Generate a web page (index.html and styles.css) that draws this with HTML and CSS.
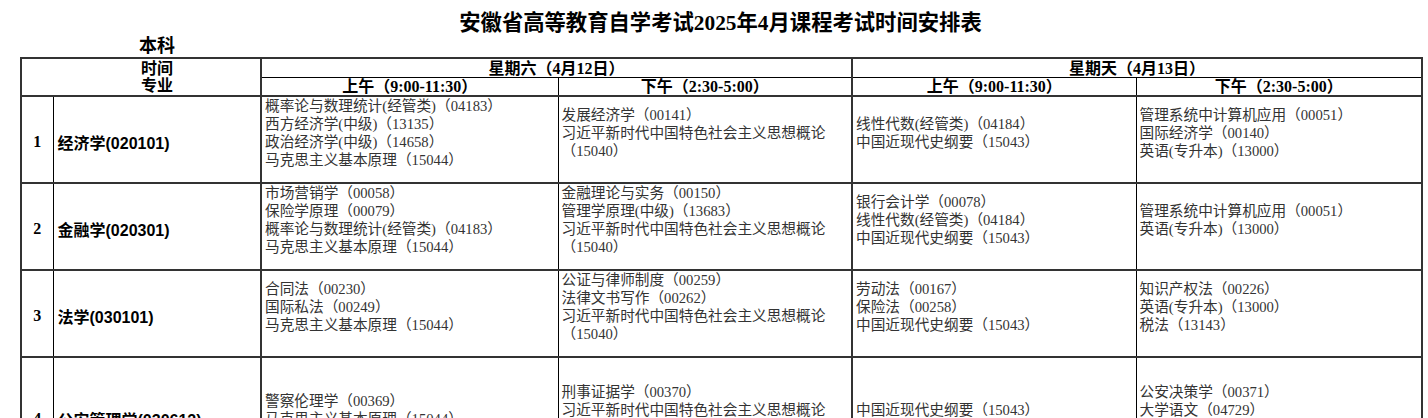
FILE: index.html
```html
<!DOCTYPE html>
<html lang="zh-CN">
<head>
<meta charset="utf-8">
<title>安徽省高等教育自学考试2025年4月课程考试时间安排表</title>
<link rel="stylesheet" href="styles.css">
</head>
<body>
<div class="page">
  <h1 class="title">安徽省高等教育自学考试2025年4月课程考试时间安排表</h1>
  <div class="level">本科</div>
  <table class="schedule">
    <colgroup>
      <col class="c-no">
      <col class="c-major">
      <col class="c-sat-am">
      <col class="c-sat-pm">
      <col class="c-sun-am">
      <col class="c-sun-pm">
    </colgroup>
    <thead>
      <tr class="hrow">
        <th class="corner" colspan="2" rowspan="2"><div>时间</div><div>专业</div></th>
        <th class="day group-start" colspan="2">星期六（4月12日）</th>
        <th class="day group-start" colspan="2">星期天（4月13日）</th>
      </tr>
      <tr class="hrow">
        <th class="slot group-start">上午（9:00-11:30）</th>
        <th class="slot">下午（2:30-5:00）</th>
        <th class="slot group-start">上午（9:00-11:30）</th>
        <th class="slot">下午（2:30-5:00）</th>
      </tr>
    </thead>
    <tbody>
      <tr class="brow">
        <td class="no">1</td>
        <td class="major">经济学(020101)</td>
        <td class="courses group-start">
          <div>概率论与数理统计(经管类)（04183）</div>
          <div>西方经济学(中级)（13135）</div>
          <div>政治经济学(中级)（14658）</div>
          <div>马克思主义基本原理（15044）</div>
        </td>
        <td class="courses">
          <div>发展经济学（00141）</div>
          <div>习近平新时代中国特色社会主义思想概论（15040）</div>
        </td>
        <td class="courses group-start">
          <div>线性代数(经管类)（04184）</div>
          <div>中国近现代史纲要（15043）</div>
        </td>
        <td class="courses">
          <div>管理系统中计算机应用（00051）</div>
          <div>国际经济学（00140）</div>
          <div>英语(专升本)（13000）</div>
        </td>
      </tr>
      <tr class="brow">
        <td class="no">2</td>
        <td class="major">金融学(020301)</td>
        <td class="courses group-start">
          <div>市场营销学（00058）</div>
          <div>保险学原理（00079）</div>
          <div>概率论与数理统计(经管类)（04183）</div>
          <div>马克思主义基本原理（15044）</div>
        </td>
        <td class="courses">
          <div>金融理论与实务（00150）</div>
          <div>管理学原理(中级)（13683）</div>
          <div>习近平新时代中国特色社会主义思想概论（15040）</div>
        </td>
        <td class="courses group-start">
          <div>银行会计学（00078）</div>
          <div>线性代数(经管类)（04184）</div>
          <div>中国近现代史纲要（15043）</div>
        </td>
        <td class="courses">
          <div>管理系统中计算机应用（00051）</div>
          <div>英语(专升本)（13000）</div>
        </td>
      </tr>
      <tr class="brow">
        <td class="no">3</td>
        <td class="major">法学(030101)</td>
        <td class="courses group-start">
          <div>合同法（00230）</div>
          <div>国际私法（00249）</div>
          <div>马克思主义基本原理（15044）</div>
        </td>
        <td class="courses">
          <div>公证与律师制度（00259）</div>
          <div>法律文书写作（00262）</div>
          <div>习近平新时代中国特色社会主义思想概论（15040）</div>
        </td>
        <td class="courses group-start">
          <div>劳动法（00167）</div>
          <div>保险法（00258）</div>
          <div>中国近现代史纲要（15043）</div>
        </td>
        <td class="courses">
          <div>知识产权法（00226）</div>
          <div>英语(专升本)（13000）</div>
          <div>税法（13143）</div>
        </td>
      </tr>
      <tr class="brow tall">
        <td class="no">4</td>
        <td class="major">公安管理学(030612)</td>
        <td class="courses group-start">
          <div>警察伦理学（00369）</div>
          <div>马克思主义基本原理（15044）</div>
        </td>
        <td class="courses">
          <div>刑事证据学（00370）</div>
          <div>习近平新时代中国特色社会主义思想概论（15040）</div>
        </td>
        <td class="courses group-start">
          <div>中国近现代史纲要（15043）</div>
        </td>
        <td class="courses">
          <div>公安决策学（00371）</div>
          <div>大学语文（04729）</div>
          <div>英语(专升本)（13000）</div>
        </td>
      </tr>
    </tbody>
  </table>
</div>
</body>
</html>
```

FILE: styles.css
```css
html, body {
  margin: 0;
  padding: 0;
  background: #ffffff;
  overflow: hidden;
}

body {
  font-family: "Liberation Serif", "Noto Sans CJK SC", serif;
  color: #000;
}

.page {
  padding-left: 20px;
  width: 1401px;
}

.title {
  margin: 0;
  padding-top: 6px;
  height: 34px;
  line-height: 34px;
  font-size: 21.33px;
  font-weight: bold;
  text-align: center;
}

.level {
  height: 17px;
  line-height: 12px;
  padding-left: 119px;
  font-size: 18px;
  font-weight: bold;
}

.schedule {
  width: 1401px;
  table-layout: fixed;
  border-collapse: collapse;
  border: 2px solid #333;
}

.c-no { width: 32px; }
.c-major { width: 208px; }
.c-sat-am { width: 297px; }
.c-sat-pm { width: 294px; }
.c-sun-am { width: 284px; }
.c-sun-pm { width: 286px; }

.schedule th,
.schedule td {
  border: 1px solid #000;
  padding: 0;
}

.schedule .group-start {
  border-left: 2px solid #333;
}

.hrow {
  height: 19px;
}

.hrow th {
  font-size: 16px;
  font-weight: bold;
  line-height: 16px;
  padding-top: 1px;
  text-align: center;
  vertical-align: bottom;
  white-space: nowrap;
}

.hrow th.corner {
  text-align: left;
  vertical-align: top;
  line-height: 17px;
  padding: 1px 0 0 119px;
  border-bottom: 2px solid #333;
}

.hrow th.slot {
  border-bottom: 2px solid #333;
}

.brow {
  height: 87px;
}

.brow.tall {
  height: 119px;
}

.brow td {
  border-top: 2px solid #333;
  vertical-align: middle;
}

.brow td.no {
  text-align: center;
  font-size: 16px;
  font-weight: bold;
  padding-top: 5px;
}

.brow td.major {
  font-family: "Liberation Sans", "Noto Sans CJK SC", sans-serif;
  font-size: 16px;
  font-weight: bold;
  padding: 5px 0 0 4px;
  white-space: nowrap;
}

.brow td.courses {
  font-size: 14.67px;
  line-height: 18px;
  color: #333;
  padding: 0 3px 13px 3px;
}
```
